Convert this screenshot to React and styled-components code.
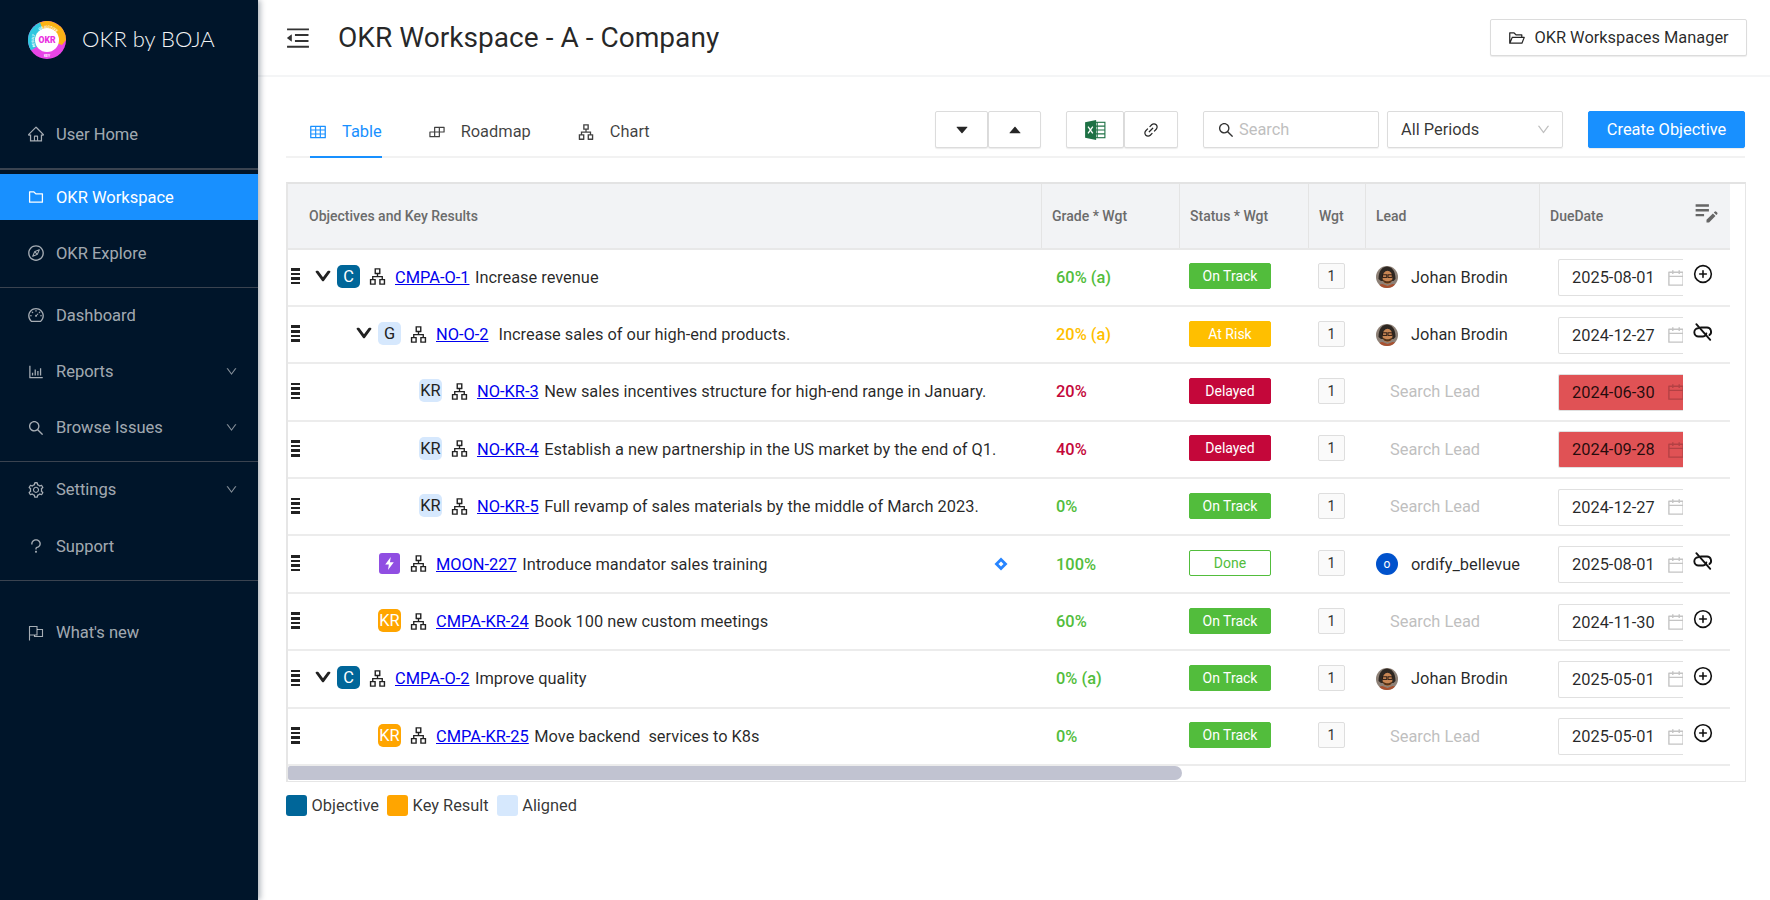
import React from 'react';
import styled, { createGlobalStyle } from 'styled-components';
import {
  AiOutlineHome, AiOutlineFolder, AiOutlineCompass, AiOutlineDashboard, AiOutlineBarChart,
  AiOutlineSearch, AiOutlineSetting, AiOutlineQuestion, AiOutlineMenuFold, AiOutlineFolderOpen,
  AiOutlineTable, AiOutlineBuild, AiOutlineApartment, AiFillCaretDown, AiFillCaretUp, AiOutlineLink,
  AiOutlineCalendar, AiOutlineDown,
} from 'react-icons/ai';
import { MdEditNote } from 'react-icons/md';
import { CirclePlus } from 'lucide-react';

const Global = createGlobalStyle`
  html, body { margin: 0; padding: 0; background: #fff; }
  * { box-sizing: border-box; }
  body { font-family: Roboto, "Liberation Sans", sans-serif; }
`;

const Page = styled.div`
  display: flex;
  width: 1770px;
  height: 900px;
  overflow: hidden;
  background: #fff;
`;

const Sidebar = styled.aside`
  width: 258px;
  flex: none;
  background: #00152a;
  box-shadow: 2px 0 6px rgba(0, 21, 41, 0.35);
  z-index: 2;
  display: flex;
  flex-direction: column;
`;

const Brand = styled.div`
  display: flex;
  align-items: center;
  height: 80px;
  margin-bottom: 31px;
  padding-left: 28px;
  gap: 16px;
`;

const BrandName = styled.span`
  font-family: Lato, sans-serif;
  font-weight: 300;
  font-size: 22px;
  color: #f2f4f6;
  margin-bottom: 4px;
`;

const MenuGroup = styled.nav`
  display: flex;
  flex-direction: column;
  gap: 10.3px;
`;

const MenuItem = styled.div`
  height: 46px;
  display: flex;
  align-items: center;
  padding: 0 20px 0 27px;
  gap: 11px;
  font-size: 16.5px;
  color: ${(p) => (p.$active ? '#fff' : 'rgba(255,255,255,0.65)')};
  background: ${(p) => (p.$active ? '#1890ff' : 'transparent')};
  svg.lead { width: 18px; height: 18px; flex: none; }
`;

const MenuCaret = styled(AiOutlineDown)`
  margin-left: auto;
  width: 13px;
  height: 13px;
  opacity: 0.8;
`;

const MenuDivider = styled.div`
  height: ${(p) => (p.$thick ? '2px' : '1px')};
  background: #3a4350;
  margin: 10.5px 0 ${(p) => (p.$after ? p.$after : '4.5px')};
`;

const Main = styled.main`
  flex: 1;
  min-width: 0;
  display: flex;
  flex-direction: column;
`;

const TopBar = styled.header`
  height: 77px;
  flex: none;
  border-bottom: 2px solid #f4f5f6;
  display: flex;
  align-items: center;
  padding: 0 22px 0 26px;
`;

const Collapse = styled(AiOutlineMenuFold)`
  width: 28px;
  height: 28px;
  color: #333;
  margin-right: 26px;
`;

const PageTitle = styled.h1`
  margin: 0;
  font-size: 28.1px;
  font-weight: 400;
  color: rgba(0, 0, 0, 0.85);
`;

const Button = styled.button`
  font-family: inherit;
  height: 37px;
  background: #fff;
  border: 1px solid #dcdcdc;
  border-radius: 2px;
  box-shadow: 0 1px 1px rgba(0, 0, 0, 0.08);
  display: inline-flex;
  align-items: center;
  justify-content: center;
  padding: 0;
  color: rgba(0, 0, 0, 0.85);
  font-size: 16.4px;
`;

const ManagerButton = styled(Button)`
  margin-left: auto;
  margin-right: 1px;
  width: 257px;
  gap: 8px;
  svg { width: 18px; height: 18px; }
`;

const Content = styled.div`
  flex: 1;
  padding: 34px 24px 0 28px;
  display: flex;
  flex-direction: column;
`;

const TabBar = styled.div`
  display: flex;
  height: 47px;
  flex: none;
  align-items: stretch;
  margin-right: 1px;
  border-bottom: 2px solid #f2f2f2;
  padding-left: 24px;
`;

const Tab = styled.div`
  display: flex;
  align-items: center;
  gap: 16px;
  margin-right: 47px;
  height: 47px;
  padding-bottom: 4px;
  font-size: 16.4px;
  color: ${(p) => (p.$active ? '#1890ff' : 'rgba(0,0,0,0.75)')};
  border-bottom: 2px solid ${(p) => (p.$active ? '#1890ff' : 'transparent')};
  svg { width: 18px; height: 18px; margin: 0 -1px; }
`;

const Toolbar = styled.div`
  margin-left: auto;
  display: flex;
  align-items: flex-start;
`;

const BtnGroup = styled.div`
  display: flex;
  margin-right: 25px;
`;

const IconButton = styled(Button)`
  width: ${(p) => p.$w || 53}px;
  svg { width: ${(p) => p.$icon || 16}px; height: ${(p) => p.$icon || 16}px; }
`;

const SearchBox = styled.div`
  width: 176px;
  height: 37px;
  border: 1px solid #dcdcdc;
  border-radius: 2px;
  display: flex;
  align-items: center;
  gap: 4px;
  padding-left: 13px;
  color: #bfbfbf;
  font-size: 16.4px;
  margin-right: 8px;
  box-shadow: 0 1px 1px rgba(0, 0, 0, 0.06);
  svg { width: 18px; height: 18px; color: #333; }
`;

const PeriodSelect = styled.div`
  width: 176px;
  height: 37px;
  border: 1px solid #dcdcdc;
  border-radius: 2px;
  display: flex;
  align-items: center;
  padding: 0 11px 0 13px;
  font-size: 16.4px;
  color: rgba(0, 0, 0, 0.8);
  margin-right: 25px;
  box-shadow: 0 1px 1px rgba(0, 0, 0, 0.06);
  svg { margin-left: auto; width: 15px; height: 15px; color: #bfbfbf; }
`;

const CreateButton = styled(Button)`
  width: 157px;
  background: #1890ff;
  border-color: #1890ff;
  color: #fff;
`;

const TableFrame = styled.section`
  margin-top: 24px;
  width: 1460px;
  height: 600px;
  flex: none;
  border: 1px solid #e6e6e6;
  border-left-width: 2px;
  border-top: 2px solid #e3e3e3;
  border-bottom-width: 1px;
`;

const HeaderRow = styled.div`
  width: 1442px;
  height: 65.5px;
  display: grid;
  grid-template-columns: 754px 138px 129px 57px 174px 190px;
  background: #f2f3f5;
  border-bottom: 2px solid #e8e8e8;
`;

const HeadCell = styled.div`
  display: flex;
  align-items: center;
  padding-left: ${(p) => p.$pad || 10}px;
  font-size: 14px;
  font-weight: 500;
  color: #6b6b6b;
  border-right: 1px solid #e4e4e4;
  position: relative;
  &:last-child { border-right: none; }
`;

const EditNote = styled(MdEditNote)`
  position: absolute;
  right: 9px;
  top: 13px;
  width: 29px;
  height: 29px;
  color: #666;
`;

const Row = styled.div`
  width: 1442px;
  height: 57.4px;
  display: grid;
  grid-template-columns: 754px 138px 129px 57px 174px 190px;
  border-bottom: 2px solid #ececec;
  color: rgba(0, 0, 0, 0.85);
  font-size: 16.4px;
`;

const Cell = styled.div`
  display: flex;
  align-items: center;
  min-width: 0;
`;

const ObjCell = styled(Cell)`
  padding-left: 3px;
`;

const Handle = styled.div`
  width: 8.5px;
  flex: none;
  margin-right: 0.5px;
  display: flex;
  flex-direction: column;
  gap: 2px;
  margin-top: -2px;
  span { display: block; height: 2.6px; background: #222; }
`;

const Indent = styled.div`
  width: ${(p) => p.$w}px;
  flex: none;
  display: flex;
  justify-content: flex-end;
  padding-right: 5px;
  margin-top: -3px;
  svg { width: 18px; height: 18px; color: #222; stroke: #222; stroke-width: 80; }
`;

const Badge = styled.div`
  width: 23px;
  height: 23px;
  flex: none;
  border-radius: 5px;
  margin-top: -2px;
  display: flex;
  align-items: center;
  justify-content: center;
  font-size: 16.4px;
  background: ${(p) => ({ C: '#006699', G: '#d6e8fd', B: '#d6e8fd', O: '#ffa500', E: '#904ee2' }[p.$kind])};
  color: ${(p) => (p.$kind === 'C' || p.$kind === 'O' ? '#fff' : '#222')};
`;

const EpicBadge = styled(Badge)`
  width: 21px;
  height: 21px;
  margin: -1px 1px 0 1px;
  border-radius: 3px;
  svg { width: 15px; height: 15px; }
`;

const Tree = styled(AiOutlineApartment)`
  width: 19px;
  height: 19px;
  flex: none;
  margin: -1px 8px 0 8px;
  color: #222;
`;

const IssueLink = styled.a`
  color: #0000ee;
  text-decoration: underline;
`;

const Summary = styled.span`
  margin-left: ${(p) => (p.$wide ? 10 : 5.5)}px;
  white-space: pre;
`;

const Diamond = styled.svg`
  margin-left: auto;
  margin-right: 34px;
  width: 14px;
  height: 14px;
`;

const GradeCell = styled(Cell)`
  padding-left: 14px;
  font-weight: 500;
  color: ${(p) => p.$c};
`;

const StatusCell = styled(Cell)`
  padding-left: 9px;
`;

const StatusTag = styled.div`
  width: 82px;
  height: 26px;
  margin-top: -2px;
  border-radius: 2px;
  display: flex;
  align-items: center;
  justify-content: center;
  font-size: 14px;
  color: ${(p) => (p.$outline ? '#52bd3c' : '#fff')};
  background: ${(p) => (p.$outline ? '#fff' : p.$c)};
  border: 1px solid ${(p) => p.$c};
`;

const WgtCell = styled(Cell)`
  padding-left: 9px;
`;

const WgtBox = styled.div`
  width: 27px;
  height: 26px;
  margin-top: -2px;
  background: #fafafa;
  border: 1px solid #dedede;
  border-radius: 2px;
  display: flex;
  align-items: center;
  justify-content: center;
  font-size: 14px;
  color: #333;
`;

const LeadCell = styled(Cell)`
  padding-left: 10px;
  gap: 13px;
`;

const Avatar = styled.div`
  width: 22px;
  height: 22px;
  flex: none;
  border-radius: 50%;
  overflow: hidden;
  svg { display: block; width: 22px; height: 22px; }
`;

const LetterAvatar = styled(Avatar)`
  background: #0052cc;
  color: #fff;
  font-size: 12px;
  display: flex;
  align-items: center;
  justify-content: center;
`;

const LeadPlaceholder = styled.span`
  margin-left: 14px;
  color: #bfbfbf;
`;

const DueCell = styled(Cell)`
  padding-left: 18px;
  position: relative;
`;

const DateInput = styled.div`
  width: 125px;
  height: 37px;
  flex: none;
  margin-top: 1px;
  border: 1px solid #e0e0e0;
  border-right: none;
  border-radius: 2px 0 0 2px;
  display: flex;
  align-items: center;
  padding-left: 13px;
  overflow: hidden;
  color: rgba(0, 0, 0, 0.85);
  background: ${(p) => (p.$late ? '#e05255' : '#fff')};
  svg { width: 20px; height: 20px; flex: none; margin-left: 11px; color: ${(p) => (p.$late ? 'rgba(0,0,0,0.2)' : '#c4c4c4')}; }
`;

const DateText = styled.span`
  flex: none;
  white-space: nowrap;
`;

const RowAction = styled.div`
  margin: -6px 0 0 10px;
  width: 20px;
  height: 20px;
  color: #111;
  svg { width: 20px; height: 20px; display: block; }
`;

const ScrollTrack = styled.div`
  height: 14px;
  width: 100%;
`;

const ScrollThumb = styled.div`
  width: 894px;
  height: 14px;
  background: #c1c3d1;
  border-radius: 2px 7px 7px 2px;
`;

const Legend = styled.div`
  display: flex;
  align-items: center;
  margin-top: 13px;
  font-size: 16.4px;
  color: rgba(0, 0, 0, 0.8);
`;

const Swatch = styled.span`
  width: 21px;
  height: 21px;
  border-radius: 3px;
  margin-right: 4.5px;
  background: ${(p) => p.$c};
`;

const LegendLabel = styled.span`
  margin-right: 8px;
`;

const ExcelIcon = () => (
  <svg viewBox="0 0 20 20">
    <rect x="7" y="3" width="12" height="14" fill="#fff" stroke="#1e7145" strokeWidth="1" />
    <path d="M12 3v14M7 6.5h12M7 10h12M7 13.5h12" stroke="#1e7145" strokeWidth="1" />
    <path d="M1 3 L11 1 V19 L1 17 Z" fill="#1e7145" />
    <path d="M3.7 7 L8 13 M8 7 L3.7 13" stroke="#fff" strokeWidth="1.2" />
  </svg>
);

const FlagIcon = () => (
  <svg className="lead" viewBox="0 0 18 18" fill="none" stroke="currentColor" strokeWidth="1.1">
    <path d="M2.5 16.5V2.5h7.5v8.5H2.5" />
    <path d="M10 5.500h5.500v7H7.500v-1.500" />
  </svg>
);

const UnlinkIcon = () => (
  <svg viewBox="0 0 18 18" fill="none" stroke="#111" strokeWidth="1.7" strokeLinecap="round">
    <path d="M3 2 L15.500 16" />
    <path d="M4.600 5.600 A3.700 3.700 0 0 0 5.200 13 H9 A3.200 3.200 0 0 0 12 10.200" />
    <path d="M7 5 H12.600 A3.800 3.800 0 0 1 14.800 11.800" />
  </svg>
);

const BoltIcon = () => (
  <svg viewBox="0 0 14 14"><path d="M8.2 1 L3 8 H6.4 L5.6 13 L11 5.8 H7.4 Z" fill="#fff" /></svg>
);

const Face = () => (
  <svg viewBox="0 0 22 22">
    <rect width="22" height="22" fill="#8d8076" />
    <path d="M2.500 13C2.500 4 7 .5 11 .5s8.500 3.500 8.500 12.500l-2 2H5z" fill="#2e2722" />
    <ellipse cx="11.500" cy="11.500" rx="5" ry="6.800" fill="#c98654" />
    <path d="M6.300 13c1 6 9.400 6 10.400 0l-1.400 1.200-2.600 1h-2.400l-2.600-1z" fill="#553419" />
    <rect x="6.600" y="8.800" width="4.200" height="2.600" fill="none" stroke="#201410" strokeWidth="0.9" />
    <rect x="12" y="8.800" width="4.200" height="2.600" fill="none" stroke="#201410" strokeWidth="0.9" />
    <path d="M1 22c1-3 3-4 5.500-4l5 2 5-2c2.500 0 4.500 1 5.500 4z" fill="#a9502f" />
  </svg>
);

const Logo = () => (
  <svg width="38" height="38" viewBox="0 0 38 38">
    <defs>
      <path id="logoTop" d="M7 15 A12.8 12.8 0 0 1 31 16" />
      <path id="logoLeft" d="M10 29 A13.5 13.5 0 0 1 12.5 7.5" />
    </defs>
    <circle cx="19" cy="19" r="19" fill="#e845e6" />
    <path d="M19 19 L9 3 A19 19 0 0 1 38 19 L34 24 Z" fill="#fcb315" />
    <path d="M19 19 L12 1.5 A19 19 0 0 0 3 29.5 Z" fill="#2fc7df" />
    <circle cx="19" cy="19" r="12" fill="#fff" />
    <text x="19" y="22" textAnchor="middle" fontFamily="Roboto, sans-serif" fontWeight="900" fontSize="8.6" fill="#ea2fe0">OKR</text>
    <text fontFamily="Roboto, sans-serif" fontSize="3.6" fontWeight="700" fill="#fff"><textPath href="#logoTop" startOffset="22%">OBJECTIVE</textPath></text>
    <text fontFamily="Roboto, sans-serif" fontSize="3.4" fontWeight="700" fill="#fff"><textPath href="#logoLeft" startOffset="18%">RESULT</textPath></text>
    <text x="19" y="35.5" textAnchor="middle" fontFamily="Roboto, sans-serif" fontSize="3.4" fontWeight="700" fill="#fff">KEY</text>
  </svg>
);

const DragHandle = () => (
  <Handle><span /><span /><span /><span /></Handle>
);

const GREEN = '#52bd3c';
const AMBER = '#ffbf00';
const RED = '#c4073a';

const rows = [
  { indent: 37, caret: true, kind: 'C', label: 'C', id: 'CMPA-O-1', text: 'Increase revenue', grade: '60% (a)', gc: GREEN, status: 'On Track', sc: GREEN, lead: 'johan', date: '2025-08-01', action: 'plus' },
  { indent: 78, caret: true, kind: 'G', label: 'G', id: 'NO-O-2', text: 'Increase sales of our high-end products.', wide: true, grade: '20% (a)', gc: AMBER, status: 'At Risk', sc: AMBER, lead: 'johan', date: '2024-12-27', action: 'unlink' },
  { indent: 119, kind: 'B', label: 'KR', id: 'NO-KR-3', text: 'New sales incentives structure for high-end range in January.', grade: '20%', gc: RED, status: 'Delayed', sc: RED, date: '2024-06-30', late: true },
  { indent: 119, kind: 'B', label: 'KR', id: 'NO-KR-4', text: 'Establish a new partnership in the US market by the end of Q1.', grade: '40%', gc: RED, status: 'Delayed', sc: RED, date: '2024-09-28', late: true },
  { indent: 119, kind: 'B', label: 'KR', id: 'NO-KR-5', text: 'Full revamp of sales materials by the middle of March 2023.', grade: '0%', gc: GREEN, status: 'On Track', sc: GREEN, date: '2024-12-27' },
  { indent: 78, epic: true, id: 'MOON-227', text: 'Introduce mandator sales training', diamond: true, grade: '100%', gc: GREEN, status: 'Done', sc: GREEN, outline: true, lead: 'ordify', date: '2025-08-01', action: 'unlink' },
  { indent: 78, kind: 'O', label: 'KR', id: 'CMPA-KR-24', text: 'Book 100 new custom meetings', grade: '60%', gc: GREEN, status: 'On Track', sc: GREEN, date: '2024-11-30', action: 'plus' },
  { indent: 37, caret: true, kind: 'C', label: 'C', id: 'CMPA-O-2', text: 'Improve quality', grade: '0% (a)', gc: GREEN, status: 'On Track', sc: GREEN, lead: 'johan', date: '2025-05-01', action: 'plus' },
  { indent: 78, kind: 'O', label: 'KR', id: 'CMPA-KR-25', text: 'Move backend  services to K8s', grade: '0%', gc: GREEN, status: 'On Track', sc: GREEN, date: '2025-05-01', action: 'plus' },
];

const LeadContent = ({ lead }) => {
  if (lead === 'johan') return (<><Avatar><Face /></Avatar><span>Johan Brodin</span></>);
  if (lead === 'ordify') return (<><LetterAvatar>o</LetterAvatar><span>ordify_bellevue</span></>);
  return <LeadPlaceholder>Search Lead</LeadPlaceholder>;
};

const TableRow = ({ r }) => (
  <Row>
    <ObjCell>
      <DragHandle />
      <Indent $w={r.indent}>{r.caret && <AiOutlineDown />}</Indent>
      {r.epic ? <EpicBadge $kind="E"><BoltIcon /></EpicBadge> : <Badge $kind={r.kind}>{r.label}</Badge>}
      <Tree />
      <IssueLink href="#">{r.id}</IssueLink>
      <Summary $wide={r.wide}>{r.text}</Summary>
      {r.diamond && (
        <Diamond viewBox="0 0 14 14">
          <path d="M7 0.5 L13.5 7 L7 13.5 L0.5 7 Z" fill="#2684ff" />
          <rect x="5.2" y="5.2" width="3.6" height="3.6" fill="#fff" transform="rotate(45 7 7)" />
        </Diamond>
      )}
    </ObjCell>
    <GradeCell $c={r.gc}>{r.grade}</GradeCell>
    <StatusCell><StatusTag $c={r.sc} $outline={r.outline}>{r.status}</StatusTag></StatusCell>
    <WgtCell><WgtBox>1</WgtBox></WgtCell>
    <LeadCell><LeadContent lead={r.lead} /></LeadCell>
    <DueCell>
      <DateInput $late={r.late}><DateText>{r.date}</DateText><AiOutlineCalendar /></DateInput>
      {r.action && (
        <RowAction>{r.action === 'plus' ? <CirclePlus strokeWidth={1.9} /> : <UnlinkIcon />}</RowAction>
      )}
    </DueCell>
  </Row>
);

export default function App() {
  return (
    <Page>
      <Global />
      <Sidebar>
        <Brand><Logo /><BrandName>OKR by BOJA</BrandName></Brand>
        <MenuGroup><MenuItem><AiOutlineHome className="lead" />User Home</MenuItem></MenuGroup>
        <MenuDivider $thick />
        <MenuGroup>
          <MenuItem $active><AiOutlineFolder className="lead" />OKR Workspace</MenuItem>
          <MenuItem><AiOutlineCompass className="lead" />OKR Explore</MenuItem>
        </MenuGroup>
        <MenuDivider />
        <MenuGroup>
          <MenuItem><AiOutlineDashboard className="lead" />Dashboard</MenuItem>
          <MenuItem><AiOutlineBarChart className="lead" />Reports<MenuCaret /></MenuItem>
          <MenuItem><AiOutlineSearch className="lead" />Browse Issues<MenuCaret /></MenuItem>
        </MenuGroup>
        <MenuDivider />
        <MenuGroup>
          <MenuItem><AiOutlineSetting className="lead" />Settings<MenuCaret /></MenuItem>
          <MenuItem><AiOutlineQuestion className="lead" />Support</MenuItem>
        </MenuGroup>
        <MenuDivider $after="29px" />
        <MenuGroup><MenuItem><FlagIcon />What's new</MenuItem></MenuGroup>
      </Sidebar>
      <Main>
        <TopBar>
          <Collapse />
          <PageTitle>OKR Workspace - A - Company</PageTitle>
          <ManagerButton><AiOutlineFolderOpen />OKR Workspaces Manager</ManagerButton>
        </TopBar>
        <Content>
          <TabBar>
            <Tab $active><AiOutlineTable />Table</Tab>
            <Tab><AiOutlineBuild />Roadmap</Tab>
            <Tab><AiOutlineApartment />Chart</Tab>
            <Toolbar>
              <BtnGroup>
                <IconButton><AiFillCaretDown /></IconButton>
                <IconButton><AiFillCaretUp /></IconButton>
              </BtnGroup>
              <BtnGroup>
                <IconButton $w={58} $icon={22}><ExcelIcon /></IconButton>
                <IconButton $w={54} $icon={18}><AiOutlineLink /></IconButton>
              </BtnGroup>
              <SearchBox><AiOutlineSearch />Search</SearchBox>
              <PeriodSelect>All Periods<AiOutlineDown /></PeriodSelect>
              <CreateButton>Create Objective</CreateButton>
            </Toolbar>
          </TabBar>
          <TableFrame>
            <HeaderRow>
              <HeadCell $pad={21}>Objectives and Key Results</HeadCell>
              <HeadCell>Grade * Wgt</HeadCell>
              <HeadCell>Status * Wgt</HeadCell>
              <HeadCell>Wgt</HeadCell>
              <HeadCell>Lead</HeadCell>
              <HeadCell>DueDate<EditNote /></HeadCell>
            </HeaderRow>
            {rows.map((r) => <TableRow key={r.id} r={r} />)}
            <ScrollTrack><ScrollThumb /></ScrollTrack>
          </TableFrame>
          <Legend>
            <Swatch $c="#006699" /><LegendLabel>Objective</LegendLabel>
            <Swatch $c="#ffa500" /><LegendLabel>Key Result</LegendLabel>
            <Swatch $c="#d6e8fd" /><LegendLabel>Aligned</LegendLabel>
          </Legend>
        </Content>
      </Main>
    </Page>
  );
}
